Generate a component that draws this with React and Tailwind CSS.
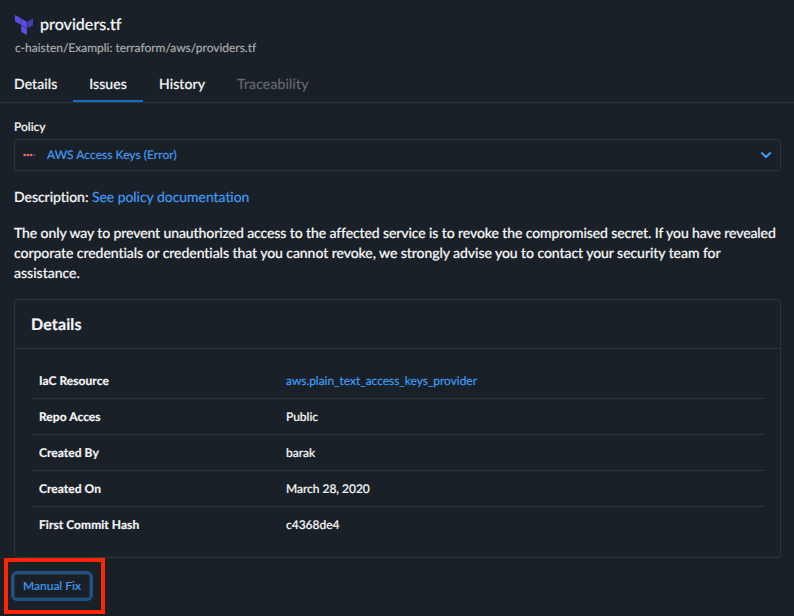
const rows = [
  { label: 'IaC Resource', value: 'aws.plain_text_access_keys_provider', link: true },
  { label: 'Repo Acces', value: 'Public' },
  { label: 'Created By', value: 'barak' },
  { label: 'Created On', value: 'March 28, 2020' },
  { label: 'First Commit Hash', value: 'c4368de4' },
];

function TerraformIcon() {
  return (
    <svg width="18" height="20" viewBox="0 0 18 20" className="shrink-0">
      <path d="M0 0l5.800 3.2v6.5L0 6.4z" fill="#5c4ee5" />
      <path d="M6.2 3.6l5.7 3.2v6.5L6.2 10z" fill="#5c4ee5" />
      <path d="M12.300 6.8L18 3.600v6.4l-5.7 3.3z" fill="#4040b2" />
      <path d="M6.2 10.6l5.7 3.2v6.2L6.2 16.900z" fill="#5c4ee5" />
    </svg>
  );
}

function Tabs() {
  return (
    <div className="flex h-9 border-b border-[#2d343b] pl-[14px] text-sm leading-[34px] font-medium tracking-[0.08px]">
      <div className="w-[59px]">Details</div>
      <div className="h-[35px] w-[70px] border-b-2 border-[#1570c4] text-center">Issues</div>
      <div className="w-[94px] pl-4">History</div>
      <div className="font-normal tracking-[0.16px] text-[#66696c]">Traceability</div>
    </div>
  );
}

export default function App() {
  return (
    <div className="relative h-[616px] w-[794px] overflow-hidden bg-[#1a2027] font-['Lato',sans-serif] text-[#f4f5f5] [-webkit-text-stroke:0.2px_currentColor] [text-rendering:geometricPrecision]">
      <header className="h-[67px] px-[15px] pt-[14px]">
        <div className="flex h-[22px] items-center gap-[7px]">
          <TerraformIcon />
          <h1 className="text-base leading-5 font-medium tracking-[0.04px]">providers.tf</h1>
        </div>
        <p className="mt-[3px] text-xs leading-[18px] tracking-[-0.02px] text-[#a9abad]">c-haisten/Exampli: terraform/aws/providers.tf</p>
      </header>
      <Tabs />
      <main className="px-[14px] pr-[13px] pt-[15px]">
        <div className="h-[21px] text-xs leading-[18px] font-medium">Policy</div>
        <div className="flex h-8 items-center rounded-[3px] border border-[#2d343b] px-2 text-xs text-[#419bf3]">
          <svg width="13" height="4" viewBox="0 0 13 4" className="shrink-0">
            <path d="M1 2h8" stroke="#a94a4e" strokeWidth="1" />
            <circle cx="1.6" cy="2" r="1.3" fill="#ee6366" />
            <circle cx="4.900" cy="2" r="1.3" fill="#ee6366" />
            <circle cx="8.200" cy="2" r="1.3" fill="#ee6366" />
            <circle cx="11.300" cy="2" r="1.1" fill="#54595f" />
          </svg>
          <span className="ml-[11px] flex-1 tracking-[0.04px]">AWS Access Keys (Error)</span>
          <svg width="12" height="8" viewBox="0 0 12 8" className="shrink-0" fill="none">
            <path d="M1.300 1.500L6 6l4.700-4.500" stroke="#419bf3" strokeWidth="2" />
          </svg>
        </div>
        <p className="mt-4 text-sm leading-5 font-medium tracking-[-0.04px]">
          Description: <a className="font-normal text-[#419bf3]">See policy documentation</a>
        </p>
        <p className="mt-4 text-sm leading-5 font-medium whitespace-nowrap">
          <span className="tracking-[-0.098px]">
            The only way to prevent unauthorized access to the affected service is to revoke the compromised secret. If you have revealed
          </span>
          <br />
          <span className="tracking-[-0.06px]">
            corporate credentials or credentials that you cannot revoke, we strongly advise you to contact your security team for
          </span>
          <br />
          assistance.
        </p>
        <section className="mt-4 h-[259px] rounded-[3px] border border-[#2d343b]">
          <h2 className="h-[49px] border-b border-[#2d343b] px-4 text-base leading-[49px] font-bold tracking-[0.14px]">Details</h2>
          <dl className="px-4 pt-[14px] text-xs">
            {rows.map((row) => (
              <div key={row.label} className="flex h-9 items-center border-b border-[#2d343b] px-2 last:border-b-0">
                <dt className="w-[247px] font-bold tracking-[0.05px]">{row.label}</dt>
                <dd className={row.link ? 'tracking-[-0.04px] text-[#419bf3]' : 'font-medium tracking-[-0.03px]'}>{row.value}</dd>
              </div>
            ))}
          </dl>
        </section>
        <button className="mt-[13px] -ml-[3px] block h-[30px] w-[82px] rounded-md border-3 border-[#1d5288] p-0 text-xs text-[#419bf3] inset-ring inset-ring-[#2d343b]">
          Manual Fix
        </button>
      </main>
      <div className="absolute top-[558px] left-1 h-14 w-[101px] border-4 border-[#ff2600]" />
    </div>
  );
}
